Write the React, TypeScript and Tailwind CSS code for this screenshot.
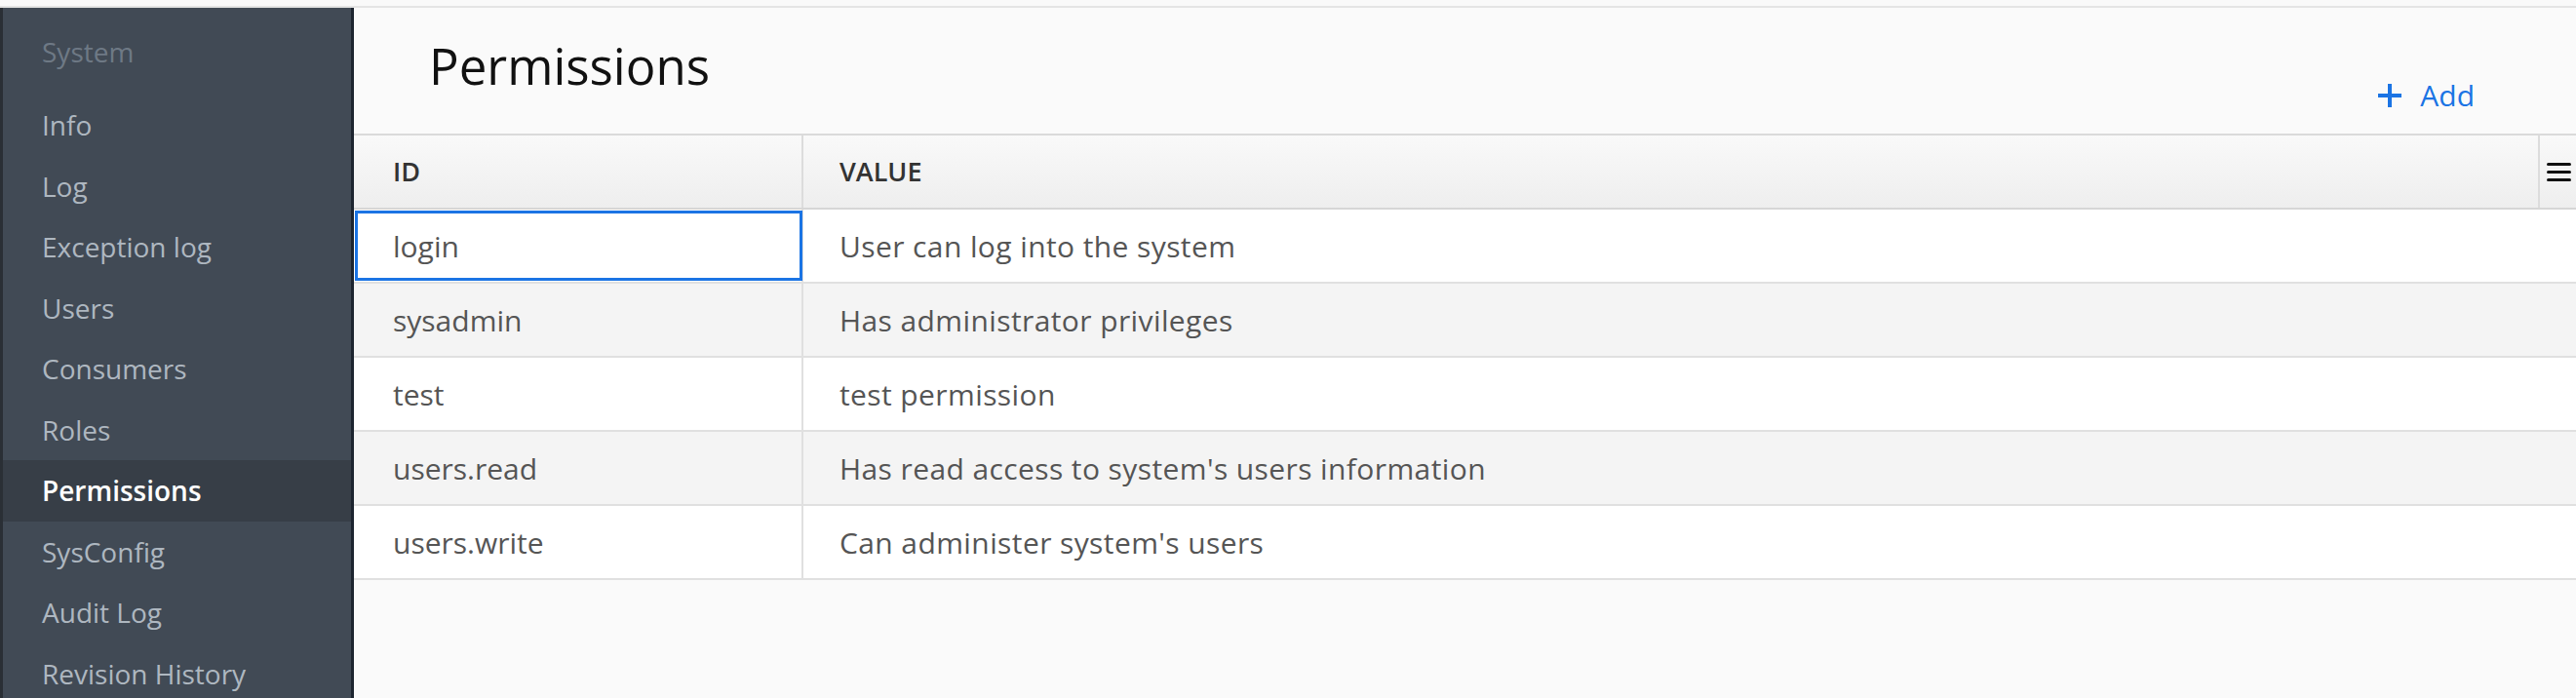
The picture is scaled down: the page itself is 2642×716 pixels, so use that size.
import React from "react";

const navItems = [
  "Info",
  "Log",
  "Exception log",
  "Users",
  "Consumers",
  "Roles",
  "Permissions",
  "SysConfig",
  "Audit Log",
  "Revision History",
];

const permissions = [
  { id: "login", value: "User can log into the system" },
  { id: "sysadmin", value: "Has administrator privileges" },
  { id: "test", value: "test permission" },
  { id: "users.read", value: "Has read access to system's users information" },
  { id: "users.write", value: "Can administer system's users" },
];

function Sidebar({ active }: { active: string }) {
  return (
    <aside className="w-[360px] shrink-0 bg-[#414a55] border-r-[3px] border-[#1d2530] flex flex-col overflow-hidden">
      {/* Section title */}
      <div className="pl-[40px] pt-[25px] pb-[10px]">
        <div className="text-[28px] leading-[40px] text-[#6e7985]">System</div>
      </div>
      <div className="ml-[40px] h-[2px] bg-[#56606b]" />

      <nav className="mt-[14px] flex flex-col">
        {navItems.map((item) => (
          <div
            key={item}
            className={
              item === active
                ? "h-[62.5px] shrink-0 flex items-center pl-[40px] bg-[#373e47] text-white font-semibold text-[28px]"
                : "h-[62.5px] shrink-0 flex items-center pl-[40px] text-[#aeb7c0] text-[28px]"
            }
          >
            {item}
          </div>
        ))}
      </nav>
    </aside>
  );
}

function PlusIcon() {
  return (
    <svg width="26" height="26" viewBox="0 0 26 26" className="shrink-0">
      <path d="M13 1v24M1 13h24" stroke="#1b74e4" strokeWidth="4" />
    </svg>
  );
}

function MenuIcon() {
  return (
    <svg width="25" height="19" viewBox="0 0 25 19">
      <rect x="0" y="0" width="25" height="3" rx="1.5" fill="#111" />
      <rect x="0" y="8" width="25" height="3" rx="1.5" fill="#111" />
      <rect x="0" y="16" width="25" height="3" rx="1.5" fill="#111" />
    </svg>
  );
}

function PermissionsTable() {
  return (
    <div className="border-t-2 border-[#dadada]">
      {/* Header */}
      <div className="flex h-[76px] bg-gradient-to-b from-[#f9f9f9] to-[#eeeeee] border-b-2 border-[#d6d6d6]">
        <div className="w-[461px] shrink-0 flex items-center pl-[40px] border-r-2 border-[#dcdcdc] text-[27px] font-semibold text-[#333]">
          ID
        </div>
        <div className="flex-1 flex items-center pl-[37px] text-[27px] font-semibold text-[#333]">
          VALUE
        </div>
        <div className="w-[39px] shrink-0 flex items-center pl-[7px] border-l-2 border-[#dcdcdc]">
          <MenuIcon />
        </div>
      </div>

      {/* Rows */}
      {permissions.map((p, i) => (
        <div
          key={p.id}
          className={
            i % 2 === 0
              ? "flex h-[76px] bg-white border-b-2 border-[#e0e0e0]"
              : "flex h-[76px] bg-[#f4f4f4] border-b-2 border-[#e0e0e0]"
          }
        >
          <div
            className={
              i === 0
                ? "w-[461px] shrink-0 flex items-center pl-[40px] border-r-2 border-[#e0e0e0] text-[30px] text-[#555] outline-3 outline-[#1b74e4] -outline-offset-4"
                : "w-[461px] shrink-0 flex items-center pl-[40px] border-r-2 border-[#e0e0e0] text-[30px] text-[#555]"
            }
          >
            {p.id}
          </div>
          <div className="flex-1 flex items-center pl-[37px] text-[30px] tracking-[0.4px] text-[#555]">{p.value}</div>
        </div>
      ))}
    </div>
  );
}

export default function App() {
  return (
    <div className="w-[2642px] h-[716px] overflow-hidden flex flex-col bg-[#fafafa] font-['Open_Sans',sans-serif]">
      {/* Top strip */}
      <div className="h-[8px] shrink-0 bg-[#f9f9f9] border-b-2 border-[#e4e4e4]" />

      <div className="flex flex-1 min-h-0">
        <div className="w-[3px] shrink-0 bg-[#2a2f35]" />
        <Sidebar active="Permissions" />

        <main className="flex-1 flex flex-col min-w-0">
          {/* Page header */}
          <div className="h-[129px] shrink-0 flex justify-between pl-[77px] pr-[104px]">
            <h1 className="pt-[34px] text-[51px] leading-none text-[#111] font-medium">Permissions</h1>
            <button className="self-end mb-[24px] flex items-center gap-[18px] text-[#1b74e4] text-[30px] leading-none">
              <PlusIcon />
              <span>Add</span>
            </button>
          </div>

          <PermissionsTable />
        </main>
      </div>
    </div>
  );
}
